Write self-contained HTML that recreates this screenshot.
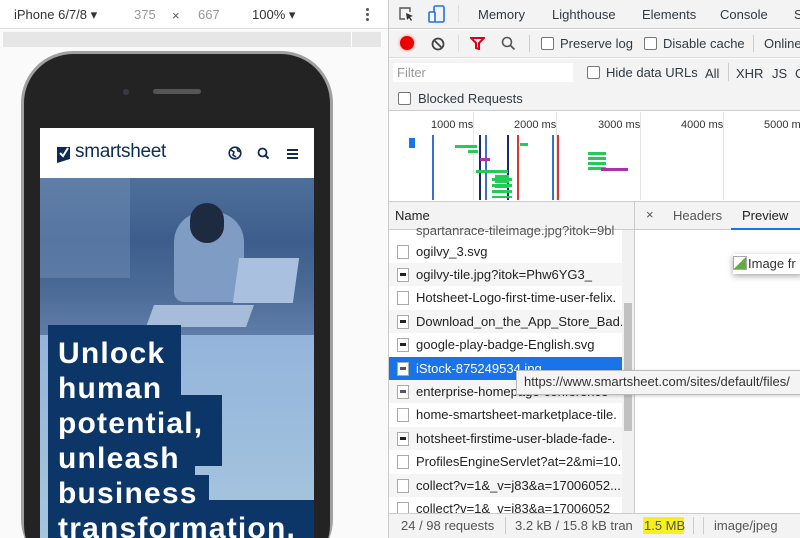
<!DOCTYPE html>
<html style="overflow:hidden;width:800px;height:538px"><head><style>
*{box-sizing:border-box;margin:0;padding:0}
body{width:800px;height:538px;overflow:hidden;position:relative;background:#fff;font-family:"Liberation Sans",sans-serif;color:#333}
.a{position:absolute}
.t{position:absolute;font-size:13px;white-space:nowrap;color:#303942}
.cb{position:absolute;width:13px;height:13px;border:1px solid #777;border-radius:2px;background:#fff}
.row{position:absolute;left:389px;width:233px;height:23px;font-size:13px;color:#222;white-space:nowrap;overflow:hidden;line-height:23px;padding-left:27px}
.row i{position:absolute;left:8px;top:5px;width:12px;height:14px;border:1px solid #aaa;background:#fff}
.row i b{position:absolute;left:2px;top:4px;width:6px;height:3px;background:#222}
.blk{position:absolute;background:#0c3668}
</style></head><body>
<div class="a" style="left:0;top:0;width:388px;height:29px;background:#fff;border-bottom:1px solid #ddd"></div>
<div class="t" style="left:14px;top:7px;color:#333">iPhone 6/7/8 ▾</div>
<div class="t" style="left:134px;top:7px;color:#999">375</div>
<div class="t" style="left:172px;top:8px;color:#555">×</div>
<div class="t" style="left:198px;top:7px;color:#999">667</div>
<div class="t" style="left:252px;top:7px;color:#333">100% ▾</div>
<div class="a" style="left:366px;top:8px;width:3px;height:3px;background:#555;border-radius:2px;box-shadow:0 5px 0 #555,0 10px 0 #555"></div>
<div class="a" style="left:0;top:30px;width:388px;height:19px;background:#fafafa"></div>
<div class="a" style="left:3px;top:32px;width:378px;height:15px;background:#e6e6e6"></div>
<div class="a" style="left:351px;top:32px;width:1px;height:15px;background:#fff"></div>
<div class="a" style="left:0;top:49px;width:388px;height:489px;background:#fafafa;overflow:hidden">
<div class="a" style="left:21px;top:2px;width:312px;height:520px;border-radius:52px;background:#a0a0a0"></div>
<div class="a" style="left:24px;top:5px;width:306px;height:520px;border-radius:49px;background:#232323"></div>
</div>
<div class="a" style="left:123px;top:89px;width:6px;height:6px;border-radius:3px;background:#3a3a44"></div>
<div class="a" style="left:153px;top:89px;width:48px;height:5px;border-radius:3px;background:#555"></div>
<div class="a" style="left:40px;top:128px;width:274px;height:50px;background:#fff"></div>
<svg class="a" style="left:57px;top:146px" width="14" height="17" viewBox="0 0 14 17"><path d="M0 1h13v12l-13 4z" fill="#0d2c54"/><path d="M3 7l3 3 5-8" stroke="#fff" stroke-width="2" fill="none"/></svg>
<div class="a" style="left:75px;top:141px;font-size:19px;color:#0d2c54;letter-spacing:-.3px">smartsheet</div>
<svg class="a" style="left:228px;top:146px" width="14" height="14" viewBox="0 0 14 14"><circle cx="7" cy="7" r="5.8" fill="none" stroke="#0d2c54" stroke-width="1.6"/><path d="M3 4l3 2-1 3 3 2M9 2l1 3 3 1" stroke="#0d2c54" stroke-width="1.6" fill="none"/></svg>
<svg class="a" style="left:257px;top:147px" width="13" height="13" viewBox="0 0 13 13"><circle cx="5.5" cy="5.5" r="4" fill="none" stroke="#0d2c54" stroke-width="1.8"/><path d="M8.5 8.5l3 3" stroke="#0d2c54" stroke-width="2"/></svg>
<div class="a" style="left:287px;top:149px;width:11px;height:2px;background:#0d2c54;box-shadow:0 4px 0 #0d2c54,0 8px 0 #0d2c54"></div>
<div class="a" style="left:40px;top:178px;width:274px;height:157px;background:linear-gradient(180deg,#4f6f9b 0%,#3d5d8c 40%,#4a6a96 70%,#5f7da8 100%)"></div>
<div class="a" style="left:40px;top:178px;width:90px;height:100px;background:#6f8fb8;opacity:.5"></div>
<div class="a" style="left:174px;top:212px;width:70px;height:90px;border-radius:30px 30px 10px 10px;background:#7e9cc4"></div>
<div class="a" style="left:190px;top:203px;width:34px;height:40px;border-radius:17px;background:#1d2a40"></div>
<div class="a" style="left:236px;top:258px;width:60px;height:45px;background:#a9c0de;transform:skewX(-8deg)"></div>
<div class="a" style="left:150px;top:305px;width:100px;height:22px;background:#a7bcd8;transform:skewX(-20deg)"></div>
<div class="a" style="left:40px;top:335px;width:274px;height:203px;background:linear-gradient(180deg,#94b4dc,#a6c6de)"></div>
<div class="blk" style="left:48px;top:325px;width:133px;height:71px"></div>
<div class="blk" style="left:48px;top:395px;width:174px;height:71px"></div>
<div class="blk" style="left:48px;top:465px;width:147px;height:36px"></div>
<div class="blk" style="left:48px;top:475px;width:161px;height:63px"></div>
<div class="blk" style="left:48px;top:500px;width:266px;height:38px"></div>
<div class="a" style="left:58px;top:336px;width:256px;height:202px;overflow:hidden;font-size:30px;font-weight:bold;color:#fff;line-height:35px;letter-spacing:1.2px;white-space:nowrap">Unlock<br>human<br>potential,<br>unleash<br>business<br>transformation.</div>
<div class="a" style="left:388px;top:0;width:1px;height:538px;background:#ccc"></div>
<div class="a" style="left:389px;top:0;width:411px;height:29px;background:#f3f3f3;border-bottom:1px solid #ccc"></div>
<svg class="a" style="left:398px;top:6px" width="16" height="16"><path d="M12 6V2H2v11h5" stroke="#555" stroke-width="1.4" fill="none"/><path d="M8 7l7 3-3 1 2 3-1 1-2-3-2 2z" fill="#333"/></svg>
<svg class="a" style="left:428px;top:5px" width="18" height="19"><rect x="6" y="1" width="10" height="16" rx="1.5" fill="none" stroke="#1a73e8" stroke-width="1.6"/><rect x="1" y="7" width="6" height="10" rx="1" fill="#fff" stroke="#1a73e8" stroke-width="1.6"/></svg>
<div class="a" style="left:458px;top:5px;width:1px;height:18px;background:#ddd"></div>
<div class="t" style="left:478px;top:7px">Memory</div>
<div class="t" style="left:552px;top:7px">Lighthouse</div>
<div class="t" style="left:642px;top:7px">Elements</div>
<div class="t" style="left:720px;top:7px">Console</div>
<div class="t" style="left:794px;top:7px">S</div>
<div class="a" style="left:389px;top:30px;width:411px;height:28px;background:#f3f3f3;border-bottom:1px solid #ddd"></div>
<div class="a" style="left:400px;top:36px;width:14px;height:14px;border-radius:7px;background:#e00;box-shadow:0 0 3px #f66"></div>
<svg class="a" style="left:431px;top:37px" width="14" height="14"><circle cx="7" cy="7" r="5.5" fill="none" stroke="#444" stroke-width="1.8"/><path d="M3 3l8 8" stroke="#444" stroke-width="1.8"/></svg>
<div class="a" style="left:458px;top:35px;width:1px;height:17px;background:#ddd"></div>
<svg class="a" style="left:470px;top:37px" width="15" height="13"><path d="M1 1h13l-5 5v6l-3-1V6z" fill="none" stroke="#d01" stroke-width="2"/></svg>
<svg class="a" style="left:501px;top:36px" width="15" height="15"><circle cx="6" cy="6" r="4.5" fill="none" stroke="#555" stroke-width="1.6"/><path d="M9.5 9.5l4 4" stroke="#555" stroke-width="1.8"/></svg>
<div class="a" style="left:529px;top:35px;width:1px;height:17px;background:#ccc"></div>
<div class="cb" style="left:541px;top:37px"></div><div class="t" style="left:560px;top:36px">Preserve log</div>
<div class="cb" style="left:644px;top:37px"></div><div class="t" style="left:663px;top:36px">Disable cache</div>
<div class="a" style="left:753px;top:35px;width:1px;height:17px;background:#ccc"></div>
<div class="t" style="left:764px;top:36px">Online</div>
<div class="a" style="left:389px;top:59px;width:411px;height:52px;background:#f3f3f3;border-bottom:1px solid #ccc"></div>
<div class="a" style="left:393px;top:63px;width:180px;height:19px;background:#fff"></div>
<div class="t" style="left:397px;top:65px;color:#999">Filter</div>
<div class="cb" style="left:587px;top:66px"></div><div class="t" style="left:606px;top:65px">Hide data URLs</div>
<div class="t" style="left:705px;top:66px">All</div>
<div class="a" style="left:728px;top:63px;width:1px;height:18px;background:#ccc"></div>
<div class="t" style="left:736px;top:66px">XHR</div>
<div class="t" style="left:772px;top:66px">JS</div>
<div class="t" style="left:795px;top:66px">C</div>
<div class="cb" style="left:398px;top:92px"></div><div class="t" style="left:418px;top:91px">Blocked Requests</div>
<div class="a" style="left:389px;top:112px;width:411px;height:88px;background:#fff"></div>
<div class="a" style="left:473px;top:112px;width:1px;height:88px;background:#e4e4e4"></div>
<div class="a" style="left:556px;top:112px;width:1px;height:88px;background:#e4e4e4"></div>
<div class="a" style="left:640px;top:112px;width:1px;height:88px;background:#e4e4e4"></div>
<div class="a" style="left:723px;top:112px;width:1px;height:88px;background:#e4e4e4"></div>
<div class="t" style="left:431px;top:119px;font-size:11px;color:#333">1000 ms</div>
<div class="t" style="left:514px;top:119px;font-size:11px;color:#333">2000 ms</div>
<div class="t" style="left:598px;top:119px;font-size:11px;color:#333">3000 ms</div>
<div class="t" style="left:681px;top:119px;font-size:11px;color:#333">4000 ms</div>
<div class="t" style="left:764px;top:119px;font-size:11px;color:#333">5000 ms</div>
<div class="a" style="left:432px;top:135px;width:2px;height:65px;background:#3a6fd0"></div>
<div class="a" style="left:479px;top:135px;width:2px;height:65px;background:#1b2a6a"></div>
<div class="a" style="left:485px;top:135px;width:2px;height:65px;background:#3a6fd0"></div>
<div class="a" style="left:507px;top:135px;width:2px;height:65px;background:#1b2a6a"></div>
<div class="a" style="left:517px;top:135px;width:2px;height:65px;background:#d33"></div>
<div class="a" style="left:552px;top:135px;width:2px;height:65px;background:#3a6fd0"></div>
<div class="a" style="left:557px;top:135px;width:2px;height:65px;background:#d33"></div>
<div class="a" style="left:409px;top:138px;width:6px;height:10px;background:#1a73e8"></div>
<div class="a" style="left:455px;top:145px;width:22px;height:3px;background:#2c5"></div>
<div class="a" style="left:468px;top:150px;width:10px;height:3px;background:#2c5"></div>
<div class="a" style="left:480px;top:158px;width:10px;height:3px;background:#a3a"></div>
<div class="a" style="left:476px;top:170px;width:32px;height:3px;background:#2c5"></div>
<div class="a" style="left:495px;top:175px;width:14px;height:15px;background:repeating-linear-gradient(180deg,#2c5 0 3px,transparent 3px 5px)"></div>
<div class="a" style="left:492px;top:178px;width:20px;height:20px;background:repeating-linear-gradient(180deg,#2c5 0 3px,transparent 3px 6px)"></div>
<div class="a" style="left:588px;top:152px;width:18px;height:18px;background:repeating-linear-gradient(180deg,#2c5 0 3px,transparent 3px 5px)"></div>
<div class="a" style="left:601px;top:168px;width:27px;height:3px;background:#a3a"></div>
<div class="a" style="left:520px;top:143px;width:8px;height:3px;background:#2c5"></div>
<div class="a" style="left:389px;top:201px;width:246px;height:29px;background:#f3f3f3;border-top:1px solid #ccc;border-bottom:1px solid #ccc"></div>
<div class="t" style="left:395px;top:208px;color:#222">Name</div>
<div class="a" style="left:634px;top:201px;width:1px;height:312px;background:#ccc"></div>
<div class="a" style="left:635px;top:201px;width:165px;height:29px;background:#f3f3f3;border-top:1px solid #ccc;border-bottom:1px solid #ccc"></div>
<div class="t" style="left:646px;top:207px;color:#555">×</div>
<div class="t" style="left:673px;top:208px;color:#555">Headers</div>
<div class="t" style="left:742px;top:208px;color:#222">Preview</div>
<div class="a" style="left:731px;top:228px;width:69px;height:2px;background:#1a73e8"></div>
<div class="a" style="left:389px;top:230px;width:233px;height:283px;background:#fff"></div>
<div class="row" style="top:219px;color:#555">spartanrace-tileimage.jpg?itok=9bl</div>
<div class="row" style="top:240px;background:#fff"><i></i>ogilvy_3.svg</div>
<div class="row" style="top:263px;background:#f5f5f5"><i><b></b></i>ogilvy-tile.jpg?itok=Phw6YG3_</div>
<div class="row" style="top:286px"><i></i>Hotsheet-Logo-first-time-user-felix.</div>
<div class="row" style="top:310px;background:#f5f5f5"><i><b></b></i>Download_on_the_App_Store_Bad...</div>
<div class="row" style="top:333px"><i><b></b></i>google-play-badge-English.svg</div>
<div class="row" style="top:357px;background:#1a73e8;color:#fff"><i><b style="background:#555"></b></i>iStock-875249534.jpg</div>
<div class="row" style="top:380px;background:#f5f5f5"><i><b style="background:#556"></b></i>enterprise-homepage-conference-</div>
<div class="row" style="top:403px"><i></i>home-smartsheet-marketplace-tile.</div>
<div class="row" style="top:427px;background:#f5f5f5"><i><b></b></i>hotsheet-firstime-user-blade-fade-.</div>
<div class="row" style="top:450px"><i></i>ProfilesEngineServlet?at=2&amp;mi=10.</div>
<div class="row" style="top:474px;background:#f5f5f5"><i></i>collect?v=1&amp;_v=j83&amp;a=17006052...</div>
<div class="row" style="top:497px;height:16px"><i></i>collect?v=1&amp;_v=j83&amp;a=17006052</div>
<div class="a" style="left:622px;top:230px;width:12px;height:283px;background:#f1f1f1"></div>
<div class="a" style="left:624px;top:303px;width:8px;height:128px;background:#c1c1c1"></div>
<div class="a" style="left:516px;top:370px;width:290px;height:25px;background:#f4f4f4;border:1px solid #bbb;box-shadow:1px 1px 3px rgba(0,0,0,.2)"></div>
<div class="t" style="left:524px;top:374px;color:#333">https://www.smartsheet.com/sites/default/files/</div>
<div class="a" style="left:733px;top:254px;width:70px;height:20px;background:#fff;box-shadow:0 2px 6px rgba(0,0,0,.35)"></div>
<div class="a" style="left:733px;top:256px;width:14px;height:14px;border:1px solid #aaa;background:linear-gradient(135deg,#fff 50%,#6a4 50%)"></div>
<div class="t" style="left:748px;top:256px;color:#333">Image fr</div>
<div class="a" style="left:389px;top:513px;width:411px;height:25px;background:#f3f3f3;border-top:1px solid #ccc"></div>
<div class="t" style="left:401px;top:518px;color:#555">24 / 98 requests</div>
<div class="a" style="left:505px;top:517px;width:1px;height:17px;background:#ccc"></div>
<div class="t" style="left:515px;top:518px;color:#555">3.2 kB / 15.8 kB tran</div>
<div class="a" style="left:643px;top:517px;width:41px;height:17px;background:#f6f020"></div>
<div class="t" style="left:644px;top:518px;color:#555">1.5 MB</div>
<div class="a" style="left:693px;top:517px;width:1px;height:17px;background:#ccc"></div>
<div class="a" style="left:703px;top:517px;width:1px;height:17px;background:#ccc"></div>
<div class="t" style="left:714px;top:518px;color:#555">image/jpeg</div>
</body></html>
